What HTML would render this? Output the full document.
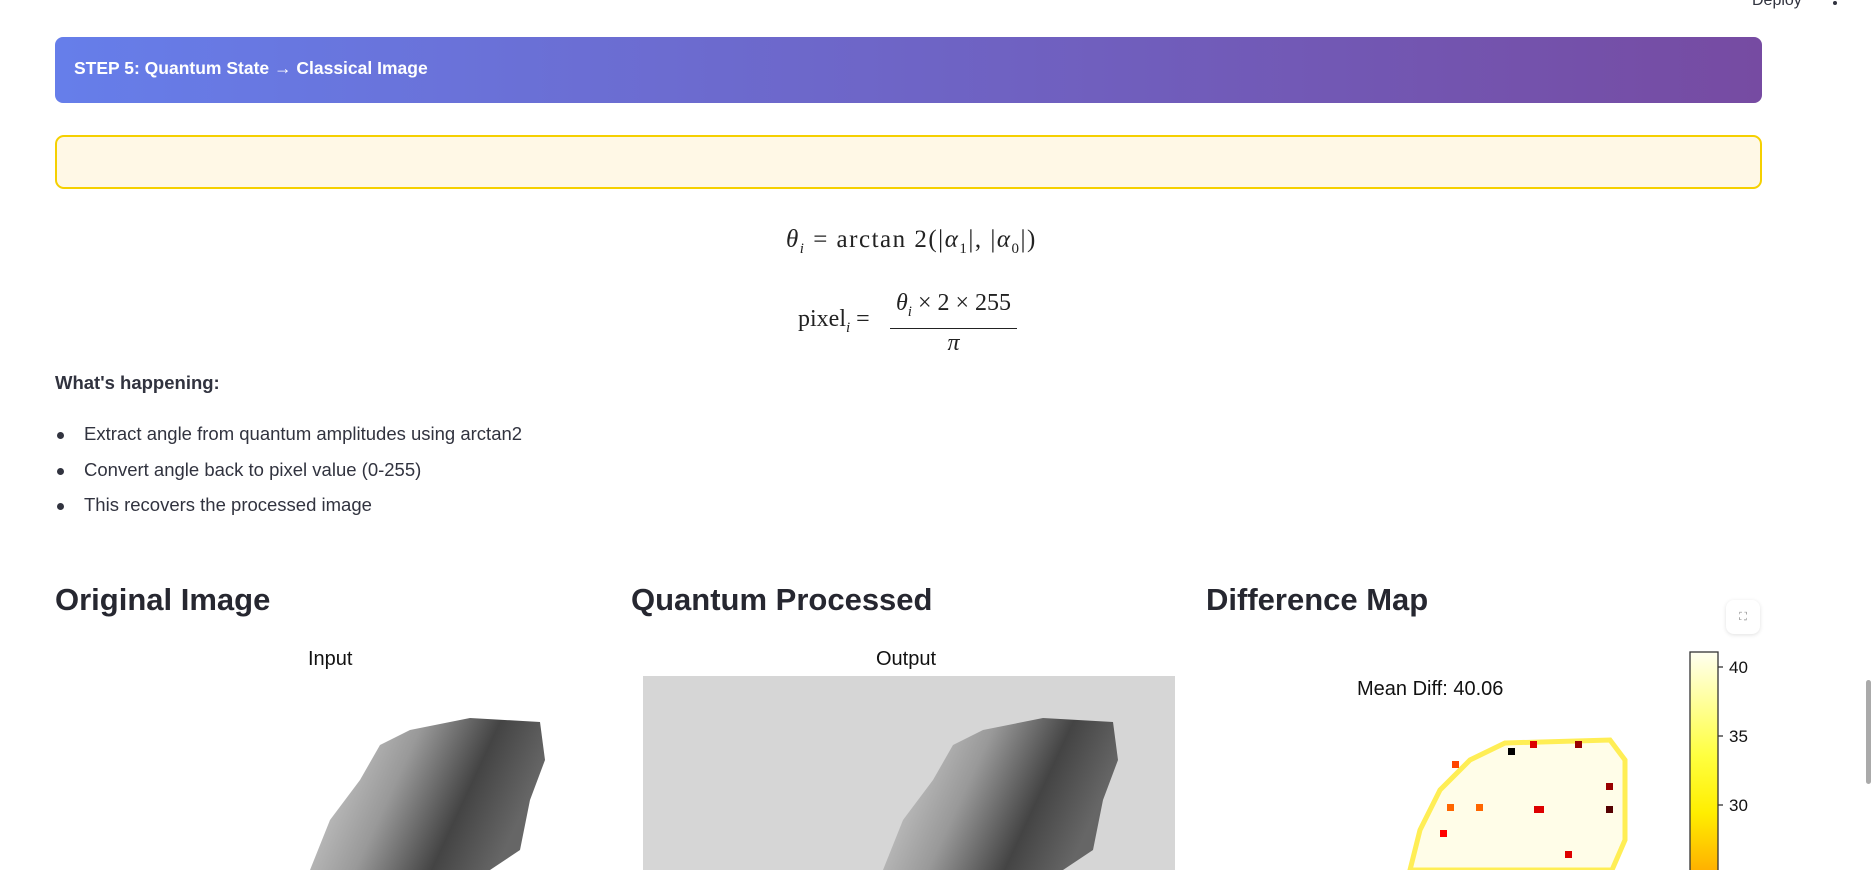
<!DOCTYPE html>
<html><head><meta charset="utf-8"><style>
body{margin:0;width:1873px;height:870px;overflow:hidden;background:#fff;font-family:"Liberation Sans",sans-serif;color:#31333f;position:relative}
.a{position:absolute}
.banner{left:55px;top:37px;width:1707px;height:66px;border-radius:8px;background:linear-gradient(90deg,#667eea,#764ba2);color:#fff;font-weight:bold;font-size:17.5px;}
.banner span{position:absolute;left:19px;top:21px}
.warn{left:55px;top:135px;width:1703px;height:50px;border:2px solid #f5d000;border-radius:9px;background:#fff8e6}
.math{font-family:"Liberation Serif",serif;font-size:24px;color:#222}
.h{font-size:31px;font-weight:bold;top:582px;color:#262730}
.li{font-size:18.5px;left:84px}
.dot{width:7px;height:7px;border-radius:50%;background:#31333f;left:57px}
</style></head><body>
<div class="a" style="left:1752px;top:-8px;font-size:16px;color:#31333f">Deploy</div>
<div class="a" style="left:1833px;top:1px;width:4px;height:4px;border-radius:50%;background:#31333f;box-shadow:0 -7px 0 #31333f"></div>
<div class="a banner"><span>STEP 5: Quantum State → Classical Image</span></div>
<div class="a warn"></div>
<div class="a math" style="left:786px;top:226px;font-size:25px;letter-spacing:1.5px"><i>θ<sub style="font-size:15px">i</sub></i> = arctan 2(|<i>α</i><sub style="font-size:15px">1</sub>|, |<i>α</i><sub style="font-size:15px">0</sub>|)</div>
<div class="a math" style="left:798px;top:306px">pixel<sub style="font-size:15px"><i>i</i></sub> =</div>
<div class="a math" style="left:890px;top:290px;width:127px;text-align:center;border-bottom:1.5px solid #222;padding-bottom:7px"><i>θ<sub style="font-size:15px">i</sub></i> × 2 × 255</div>
<div class="a math" style="left:890px;top:330px;width:127px;text-align:center"><i>π</i></div>
<div class="a" style="left:55px;top:372px;font-size:18.5px;font-weight:bold">What's happening:</div>
<div class="a dot" style="top:432px"></div><div class="a li" style="top:423px">Extract angle from quantum amplitudes using arctan2</div>
<div class="a dot" style="top:468px"></div><div class="a li" style="top:459px">Convert angle back to pixel value (0-255)</div>
<div class="a dot" style="top:503px"></div><div class="a li" style="top:494px">This recovers the processed image</div>
<div class="a h" style="left:55px">Original Image</div>
<div class="a h" style="left:631px">Quantum Processed</div>
<div class="a h" style="left:1206px">Difference Map</div>
<div class="a" style="left:1726px;top:600px;width:34px;height:34px;border-radius:8px;background:#fff;box-shadow:0 1px 4px rgba(0,0,0,.12);font-size:11px;color:#888;text-align:center;line-height:34px">⛶</div>
<div class="a" style="left:308px;top:648px;font-size:20px;color:#111">Input</div>
<div class="a" style="left:643px;top:676px;width:532px;height:194px;background:#d6d6d6"></div>
<div class="a" style="left:876px;top:648px;font-size:20px;color:#111">Output</div>
<div class="a" style="left:1357px;top:678px;font-size:20px;color:#111">Mean Diff: 40.06</div>
<svg class="a" style="left:0;top:0" width="1873" height="870">
<defs>
<linearGradient id="g" x1="0" y1="0" x2="1" y2="0.3"><stop offset="0" stop-color="#ddd"/><stop offset=".45" stop-color="#999"/><stop offset=".75" stop-color="#444"/><stop offset="1" stop-color="#666"/></linearGradient>
<linearGradient id="cb" x1="0" y1="0" x2="0" y2="1"><stop offset="0" stop-color="#fffff0"/><stop offset=".45" stop-color="#ffff40"/><stop offset=".7" stop-color="#ffee00"/><stop offset="1" stop-color="#ffa500"/></linearGradient>
</defs>
<polygon fill="url(#g)" points="410,730 470,718 540,722 545,760 530,800 520,850 490,870 310,870 330,820 360,780 380,745"/>
<polygon fill="url(#g)" points="983,730 1043,718 1113,722 1118,760 1103,800 1093,850 1063,870 883,870 903,820 933,780 953,745"/>
<polygon fill="#fffde8" stroke="#ffee55" stroke-width="5" points="1505,743 1610,740 1625,760 1625,840 1612,870 1410,870 1420,830 1440,790 1470,760"/>
<g fill="#d00"><rect x="1530" y="741" width="7" height="7"/><rect x="1575" y="741" width="7" height="7" fill="#900"/><rect x="1452" y="761" width="7" height="7" fill="#f40"/><rect x="1534" y="806" width="10" height="7"/><rect x="1606" y="783" width="7" height="7" fill="#900"/><rect x="1606" y="806" width="7" height="7" fill="#500"/><rect x="1440" y="830" width="7" height="7" fill="#f00"/><rect x="1565" y="851" width="7" height="7"/><rect x="1508" y="748" width="7" height="7" fill="#000"/><rect x="1476" y="804" width="7" height="7" fill="#f60"/><rect x="1447" y="804" width="7" height="7" fill="#f60"/></g>
<rect x="1690" y="652" width="28" height="230" fill="url(#cb)" stroke="#333" stroke-width="1.3"/>
<g stroke="#333" stroke-width="1.3"><line x1="1718" y1="667" x2="1723" y2="667"/><line x1="1718" y1="736" x2="1723" y2="736"/><line x1="1718" y1="805" x2="1723" y2="805"/></g>
<g font-family="Liberation Sans" font-size="17" fill="#111"><text x="1729" y="673">40</text><text x="1729" y="742">35</text><text x="1729" y="811">30</text></g>
</svg>
<div class="a" style="left:1866px;top:680px;width:5px;height:104px;border-radius:3px;background:#aaa"></div>
</body></html>
